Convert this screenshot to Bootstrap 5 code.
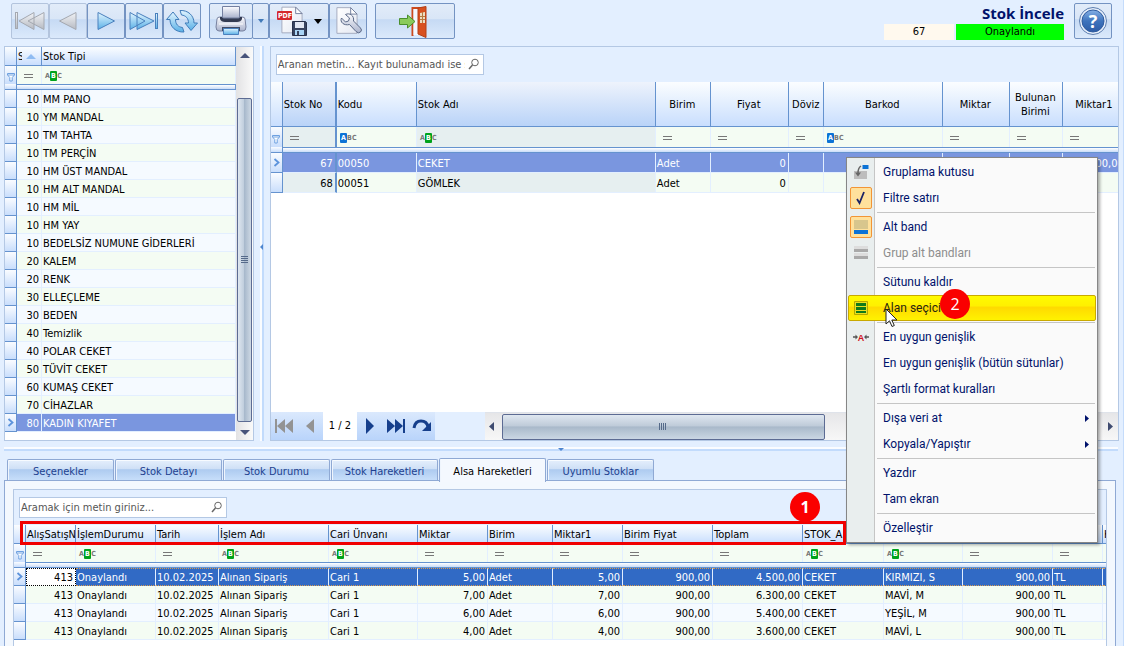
<!DOCTYPE html>
<html lang="tr">
<head>
<meta charset="utf-8">
<meta name="viewport" content="width=device-width, initial-scale=1">
<title>Stok İncele</title>
<link href="https://cdn.jsdelivr.net/npm/bootstrap@5.3.0/dist/css/bootstrap.min.css" rel="stylesheet">
<style>
:root{--line:#6593cf;--frame:#b4c8e4;--soft:#e3efff;--even:#f4fcf3;--odd:#f5faff;--navy:#00126b}
body{font:11px/14px "DejaVu Sans Condensed","DejaVu Sans",sans-serif;background:var(--soft);color:#000;height:100vh;overflow:hidden}
.app{height:100vh;border-right:1px solid #c5dcfb}
.topbar{padding:3px 11px 6px}
.tool{width:38px;height:36px;padding:0;border:1px solid #7493c2;border-radius:2px;background:linear-gradient(#e2ecf9 0,#d9e6f7 44%,#c6daf4 46%,#dbe9fb 100%);display:flex;align-items:center;justify-content:center}
.tool:disabled{border-color:#b3c4dd;opacity:1}
.tool-print{width:44px}
.tool-split{width:17px;margin-left:-1px}
.tool-pdf{width:60px;gap:6px}
.tool-exit{width:80px}
.caption{font:bold 15px/20px "Open Sans",sans-serif;color:var(--navy)}
.stat{height:16px;line-height:16px;font-size:11px;text-align:center;padding:0;border:0}
.stat-no{width:70px;background:#fff9ee}
.stat-state{width:108px;background:#0f0}
.frame{border:1px solid var(--frame)}
.side{width:250px;min-height:395px;background:#fff}
.vsplit{width:16px;position:relative}
.vsplit::before{content:"";position:absolute;left:6px;top:0;bottom:0;width:4px;background:linear-gradient(90deg,#fafcff 50%,#c2dbfc 50%)}
.hsplit{height:16px;position:relative}
.hsplit::before{content:"";position:absolute;left:4px;right:5px;top:6px;height:4px;background:linear-gradient(#fafcff 50%,#c2dbfc 50%)}
.vsplit svg{position:absolute;left:6px;top:50%}
.hsplit svg{position:absolute;left:calc(50% - 4px);top:7px}
.finder{width:208px;height:21px;margin:7px 5px;position:relative}
.finder input{width:100%;height:21px;padding:0 18px 0 1px;border:1px solid var(--frame);border-radius:0;font-size:11px;line-height:14px;background:#fff}
.finder input::placeholder{color:#555;opacity:1}
.finder svg{position:absolute;right:4px;top:4px}
.gridbox{background:#fff;overflow:hidden}
.dx{table-layout:fixed;border-collapse:separate;border-spacing:0;width:0}
.dx th,.dx td{padding:2px 2px 0 1px;height:18px;overflow:hidden;white-space:nowrap;border-right:1px solid var(--soft);border-bottom:1px solid var(--soft);vertical-align:middle}
.dx th{font-weight:400;background:linear-gradient(#fbfdff,#e2eefe 50%,#c9defe);border-color:var(--line);height:19px;padding-top:1px}
.dx td:first-child,.dx th:first-child{border-right-color:var(--line);border-bottom-color:var(--line);padding:0;text-align:center}
.dx td:first-child svg{display:block;margin:0 auto}
.dx .filt td{background:var(--even);border-bottom:0;height:18px;padding:1px 0 0 7px}
.dx .filt td:first-child{padding:4px 0 0}
.dx .filt td.txt{padding-left:3px}
.dx .band td:nth-child(2){height:6px;padding:0;border:1px solid var(--line);border-left:0;background:linear-gradient(#fff,#c9dcf8)}
.dx .band td:first-child{height:6px;border-bottom-color:var(--line)}
.dx tbody tr td{background:var(--even)}
.dx tbody tr.alt td{background:var(--odd)}
.dx .r{text-align:right}
.dx tr.sel td{background:#7a96df;color:#fff}
.dx tbody tr td:first-child,.dx tbody tr.sel td:first-child{background:linear-gradient(#fafcff,#c9defc)}
.eq{display:inline-block;width:9px;height:4px;border:solid #777;border-width:1px 0;vertical-align:middle}
.abc{font:bold 7px/10px "DejaVu Sans Condensed",sans-serif;color:#777;display:inline-flex;vertical-align:middle}
.abc>span{height:10px;width:5px;text-align:center}
.abc .g,.abc .b{background:#00a31c;color:#fff;border-radius:1px;width:7px}
.abc .b{background:#0c73d6}
.dx-main th{height:45px;text-align:center;white-space:normal}
.dx-main th.l{text-align:left}
.dx-main .filt td{height:20px}
.dx-main .row-l td{height:20px}
.dx-main .thick{border-right:2px solid var(--line)}
.dx-main tbody tr:not(.sel) td.lock{background:#e6eff0}
.dx-main th.lock{background:linear-gradient(#eef3fc,#b9d3f8)}
.dx-low tr.focus td{background:#316ac5;color:#fff;padding-top:1px;border-top:1px dotted #d79b52;border-bottom:1px dotted #d79b52}
.dx-low tr.focus td.cur{background:#fff;color:#000;border:1px dotted #000}
.dx-low tr.focus td:first-child{border-top:0;padding-top:0;border-bottom:1px solid var(--line)}
.vbar{width:17px;background:linear-gradient(90deg,#e2e2e4,#fafafa)}
.vbar .grow-thumb{flex:1;width:15px;border:1px solid #5c6b93;border-radius:2px;background:linear-gradient(90deg,#dfe7f0,#c0cedd 45%,#a8b9cc 50%,#cdd8e4);margin:40px 0 4px}
.pager{height:28px;background:var(--soft)}
.pager-set{background:linear-gradient(#dbe9fd,#b9d4fb)}
.pager-btn{border:0;padding:0;background:none;height:28px;width:26px;display:flex;align-items:center;justify-content:center}
.pager-pos{width:34px;line-height:28px}
.hbar{margin-left:50px;background:linear-gradient(#e6e6e8,#f7f7f7);border-top:1px solid #dfe3ea}
.hthumb{width:51%;margin-left:8px;height:26px;border:1px solid #5c6b93;border-radius:2px;background:linear-gradient(#dfe7f0,#bfcbd9 45%,#a9b9ca 50%,#cad6e3)}
.tabs{padding-left:7px;height:24px}
.tabs .tabbtn{width:107px;height:22px;margin-right:1px;border:1px solid #8fa9d4;border-bottom:0;border-radius:2px 2px 0 0;background:linear-gradient(#e5effc,#cfe0f6 42%,#aecbf0 46%,#c9e0fb);color:#1d3f8f;padding:2px 0 0;box-shadow:inset 0 1px #f7fbff,inset 1px 0 #eff5fd}
.tabs .tabbtn.active{height:24px;background:#f4f8fe;color:#000;position:relative;z-index:1;margin-bottom:-1px}
.pane{border:1px solid #8fa9d4;border-bottom:0;background:#f3f8fe;margin:-1px 7px 0 4px;padding:8px 8px 0;min-height:0}
.inner{border:1px solid var(--frame);border-bottom:0;background:var(--soft);position:relative;min-height:0}
.mark-box{position:absolute;left:6px;top:31px;width:826px;height:24px;border:3px solid #f00000}
.mark-no{position:absolute;width:30px;height:30px;border-radius:50%;background:#fa0000;color:#fff;font:16px/30px "Open Sans",sans-serif;text-align:center}
.mark-one{left:776px;top:2px;font-weight:bold}
.mark-two{left:93px;top:131px}
.ctx{position:absolute;right:25px;top:157px;width:252px;padding:1px;border:1px solid #868686;background:linear-gradient(90deg,#e9eeee 27px,#c5c5c5 27px,#c5c5c5 28px,#fafafa 28px);box-shadow:2px 2px 3px #0005;z-index:5;font:12px/16px Roboto,sans-serif}
.ctx button{display:flex;align-items:center;width:100%;height:26px;padding:0 0 0 2px;border:0;background:none;color:var(--navy);text-align:left}
.ctx button:disabled{color:#8d8d8d}
.ctx .ic{width:22px;height:22px;margin-right:11px;display:flex;align-items:center;justify-content:center;flex:none}
.ctx .on{background:#ffe19c;border:1px solid #f29536;border-radius:2px}
.ctx hr{margin:1px 1px 1px 29px;border:0;border-top:1px solid #c5c5c5;opacity:1;height:0}
.ctx .hot{border:1px solid #c9a900;border-radius:2px;background:linear-gradient(#fffb00,#fff000 42%,#ffd900 46%,#fff200);padding-left:1px;color:#26260f}
.ctx .tri{margin-left:auto;margin-right:7px}
.pointer{position:absolute;left:38px;top:150px}
</style>
</head>
<body>
<svg width="0" height="0" class="position-absolute">
<defs>
<linearGradient id="gg" x2="0" y2="1"><stop stop-color="#f1f3f6"/><stop offset="1" stop-color="#b6bac2"/></linearGradient>
<linearGradient id="gb" x2="0" y2="1"><stop stop-color="#e2f5ff"/><stop offset="1" stop-color="#5ab0e6"/></linearGradient>
<linearGradient id="gp" x2="0" y2="1"><stop stop-color="#fdfdff"/><stop offset="1" stop-color="#a9b2cc"/></linearGradient>
<linearGradient id="gh" x2="0" y2="1"><stop stop-color="#86b0e6"/><stop offset=".5" stop-color="#3e74bd"/><stop offset="1" stop-color="#2d5ca6"/></linearGradient>
<linearGradient id="gp2" x2="1" y2="1"><stop stop-color="#fff"/><stop offset="1" stop-color="#e4e8f2"/></linearGradient>
<symbol id="lens" viewBox="0 0 12 12"><circle cx="7" cy="4.500" r="3.300" fill="none" stroke="#666"/><path d="M4.500 7 1 11" stroke="#666" stroke-width="1.500"/></symbol>
<symbol id="funnel" viewBox="0 0 8 10"><path d="M.5 1.500h7v1.500l-2.300 2.500v3.500h-2.400v-3.500L.5 3z" fill="#fff" stroke="#6da0e0"/><path d="M1 3h6" stroke="#6da0e0"/></symbol>
<symbol id="chev" viewBox="0 0 7 9"><path d="M1.500 1l4 3.500-4 3.500" fill="none" stroke="#5c93dc" stroke-width="1.800"/></symbol>
<symbol id="page" viewBox="0 0 24 30"><path d="M1 1h15l7 7v21H1z" fill="url(#gp2)" stroke="#a1a7bb"/><path d="M16 1v7h7z" fill="#fff" stroke="#6f7b99"/></symbol>
</defs>
</svg>
<div class="app d-flex flex-column position-relative">

<header class="topbar d-flex align-items-start justify-content-between">
  <div class="d-flex" role="toolbar" aria-label="Araçlar">
    <button class="tool" disabled aria-label="İlk"><svg width="32" height="22"><g fill="url(#gg)" stroke="#a4a8b0"><rect x="1.500" y="2.500" width="2" height="16"/><path d="M20 2.500v17L5 11zM30 2.500v17L14 11z"/></g></svg></button>
    <button class="tool" disabled aria-label="Önceki"><svg width="22" height="22"><path d="M19 2.500v17L2.500 11z" fill="url(#gg)" stroke="#a4a8b0"/></svg></button>
    <button class="tool" aria-label="Sonraki"><svg width="22" height="22"><path d="M3 2.500v17L19.500 11z" fill="url(#gb)" stroke="#4a80bd"/></svg></button>
    <button class="tool" aria-label="Son"><svg width="32" height="22"><g fill="url(#gb)" stroke="#4a80bd"><path d="M2 2.500v17L17 11zM9 2.500v17L26 11z"/><rect x="27.500" y="3.500" width="2" height="15"/></g></svg></button>
    <button class="tool" aria-label="Yenile"><svg width="34" height="28"><g fill="url(#gb)" stroke="#3f7cba"><path d="M8 5l6 7.500h-3.500c0 4.500 2.500 7.500 7 8l1.500 4.500C11 25.500 5 20 5 12.500H1.500z"/><path d="M26 23.500L20 16h3.500c0-4.500-2.500-7.500-7-8L15 3.500C23 3 29 8.500 29 16h3.500z"/></g></svg></button>
    <button class="tool tool-print ms-2" aria-label="Yazdır"><svg width="32" height="32"><path d="M2 14q0-2 3-2h22q3 0 3 2l1 8q0 4-3 4H4q-3 0-3-4z" fill="url(#gp)" stroke="#77819f"/><path d="M5 12h22v2q-1 3-5 3H10q-4 0-5-3z" fill="#333b52"/><path d="M7.500 1.500h17V12q0 1-1 1h-15q-1 0-1-1z" fill="url(#gp)" stroke="#7480a0"/><path d="M7 22h18v4H7z" fill="#414a63"/><path d="M8.500 23.500h15v6h-15z" fill="url(#gb)" stroke="#4a80bd"/><path d="M4 19h24" stroke="#fff"/></svg></button>
    <button class="tool tool-split" aria-label="Yazdırma seçenekleri"><svg width="6" height="4"><path d="M0 0h6L3 4z" fill="#4179b8"/></svg></button>
    <button class="tool tool-pdf" aria-label="PDF kaydet"><svg width="32" height="32"><use href="#page" x="5" y="1" width="22" height="28"/><rect x="1" y="6" width="15" height="9" rx="1" fill="#d4282c"/><text x="2" y="13" font-size="7" font-weight="bold" fill="#fff" font-family="DejaVu Sans Condensed">PDF</text><path d="M16.500 16.500h13l1 1v13h-14z" fill="#38435e" stroke="#28314a"/><path d="M19 17h9v6h-9z" fill="#e2e7f2"/><path d="M19 25h9v5h-9z" fill="#a9d4f5"/><path d="M21 26h2v4h-2z" fill="#38435e"/></svg><svg width="8" height="5"><path d="M0 0h8L4 5z" fill="#000"/></svg></button>
    <button class="tool" aria-label="Ayarlar"><svg width="30" height="32"><use href="#page" x="3" y="1" width="22" height="29"/><path d="M8.500 13l4 4 3-1 1-3-4-3.500c4-2 9 1 8 6.500l7 7q2 2 0 4t-4.500-.5l-6.500-7C11 21 6.500 17 8.500 13z" fill="url(#gp)" stroke="#5c6a88"/></svg></button>
    <button class="tool tool-exit ms-2" aria-label="Çıkış"><svg width="34" height="34"><path d="M14.500 32V4H26" fill="none" stroke="#cc4a1e" stroke-width="2"/><path d="M15.500 5h6v26h-6z" fill="#f4f8ff"/><path d="M20 4l8-1.500v31L20 30z" fill="#d8501f" stroke="#b33f16"/><path d="M22 9l5-1v11h-5z" fill="#ecdcc0"/><path d="M24.500 8v11M22 12.500h5M22 15.500h5" stroke="#b8793f"/><path d="M1.500 14.500h8V11l7.500 6.500-7.500 6.500v-3.500h-8z" fill="#8acb5c" stroke="#4a8f2c"/></svg></button>
  </div>
  <div class="d-flex" style="gap:10px">
    <div class="text-end">
      <h1 class="caption m-0">Stok İncele</h1>
      <div class="d-flex" style="margin-top:1px;gap:2px"><output class="stat stat-no">67</output><output class="stat stat-state">Onaylandı</output></div>
    </div>
    <button class="tool" aria-label="Yardım"><svg width="30" height="30"><circle cx="15" cy="15" r="13.500" fill="#e6eefa" stroke="#5c7eb0"/><circle cx="15" cy="15" r="11" fill="url(#gh)" stroke="#2f5c9f"/><text x="15" y="21.500" text-anchor="middle" font-family="Open Sans" font-weight="bold" font-size="18" fill="#fff">?</text></svg></button>
  </div>
</header>

<section class="d-flex px-1">
  <aside class="side frame d-flex">
    <table class="dx align-self-start">
      <colgroup><col style="width:12px"><col style="width:25px"><col style="width:194px"></colgroup>
      <thead><tr><th></th><th><div class="d-flex align-items-center"><span style="width:4px" class="overflow-hidden">S</span><svg width="10" height="5" style="margin-left:4px"><path d="M0 5h10L5 0z" fill="#8fbcf2"/></svg></div></th><th>Stok Tipi</th></tr></thead>
      <tbody>
      <tr class="filt"><td><svg width="8" height="10"><use href="#funnel"/></svg></td><td><i class="eq"></i></td><td class="txt"><span class="abc"><span>A</span><span class="g">B</span><span>C</span></span></td></tr>
      <tr class="band"><td></td><td colspan="2"></td></tr>
      <tr class="alt"><td></td><td class="r">10</td><td>MM PANO</td></tr>
      <tr><td></td><td class="r">10</td><td>YM MANDAL</td></tr>
      <tr class="alt"><td></td><td class="r">10</td><td>TM TAHTA</td></tr>
      <tr><td></td><td class="r">10</td><td>TM PERÇİN</td></tr>
      <tr class="alt"><td></td><td class="r">10</td><td>HM ÜST MANDAL</td></tr>
      <tr><td></td><td class="r">10</td><td>HM ALT MANDAL</td></tr>
      <tr class="alt"><td></td><td class="r">10</td><td>HM MİL</td></tr>
      <tr><td></td><td class="r">10</td><td>HM YAY</td></tr>
      <tr class="alt"><td></td><td class="r">10</td><td>BEDELSİZ NUMUNE GİDERLERİ</td></tr>
      <tr><td></td><td class="r">20</td><td>KALEM</td></tr>
      <tr class="alt"><td></td><td class="r">20</td><td>RENK</td></tr>
      <tr><td></td><td class="r">30</td><td>ELLEÇLEME</td></tr>
      <tr class="alt"><td></td><td class="r">30</td><td>BEDEN</td></tr>
      <tr><td></td><td class="r">40</td><td>Temizlik</td></tr>
      <tr class="alt"><td></td><td class="r">40</td><td>POLAR CEKET</td></tr>
      <tr><td></td><td class="r">50</td><td>TÜVİT CEKET</td></tr>
      <tr class="alt"><td></td><td class="r">60</td><td>KUMAŞ CEKET</td></tr>
      <tr><td></td><td class="r">70</td><td>CİHAZLAR</td></tr>
      <tr class="sel"><td><svg width="7" height="9"><use href="#chev"/></svg></td><td class="r">80</td><td>KADIN KIYAFET</td></tr>
      </tbody>
    </table>
    <div class="vbar d-flex flex-column align-items-center">
      <svg width="10" height="5" style="margin-top:6px"><path d="M0 5h10L5 0z" fill="#47537a"/></svg>
      <div class="grow-thumb d-flex align-items-center justify-content-center"><svg width="7" height="8"><path d="M0 .5h7M0 2.500h7M0 4.500h7M0 6.500h7" stroke="#556a8a"/></svg></div>
      <svg width="10" height="5" style="margin:4px 0 5px"><path d="M0 0h10L5 5z" fill="#47537a"/></svg>
    </div>
  </aside>
  <div class="vsplit"><svg width="3" height="6"><path d="M3 0v6L0 3z" fill="#4f86cf"/></svg></div>
  <main class="frame flex-grow-1 d-flex flex-column overflow-hidden">
    <div class="finder"><input type="text" class="form-control shadow-none" aria-label="Stok ara" placeholder="Aranan metin... Kayıt bulunamadı ise sa"><svg width="12" height="12"><use href="#lens"/></svg></div>
    <div class="gridbox flex-grow-1">
      <table class="dx dx-main">
        <colgroup><col style="width:12px"><col style="width:54px"><col style="width:80px"><col style="width:239px"><col style="width:55px"><col style="width:78px"><col style="width:35px"><col style="width:119px"><col style="width:67px"><col style="width:53px"><col style="width:64px"></colgroup>
        <thead><tr><th></th><th class="l thick lock">Stok No</th><th class="l">Kodu</th><th class="l lock">Stok Adı</th><th>Birim</th><th>Fiyat</th><th class="px-0">Döviz</th><th>Barkod</th><th>Miktar</th><th>Bulunan Birimi</th><th>Miktar1</th></tr></thead>
        <tbody>
        <tr class="filt"><td><svg width="8" height="10"><use href="#funnel"/></svg></td><td class="thick lock"><i class="eq"></i></td><td class="txt"><span class="abc"><span class="b">A</span><span>B</span><span>C</span></span></td><td class="lock txt"><span class="abc"><span>A</span><span class="g">B</span><span>C</span></span></td><td><i class="eq"></i></td><td><i class="eq"></i></td><td><i class="eq"></i></td><td class="txt"><span class="abc"><span class="b">A</span><span>B</span><span>C</span></span></td><td><i class="eq"></i></td><td><i class="eq"></i></td><td><i class="eq"></i></td></tr>
        <tr class="band"><td></td><td colspan="10"></td></tr>
        <tr class="row-l sel"><td><svg width="7" height="9"><use href="#chev"/></svg></td><td class="r thick">67</td><td>00050</td><td>CEKET</td><td>Adet</td><td class="r">0</td><td></td><td></td><td></td><td></td><td class="r">900,00</td></tr>
        <tr class="row-l"><td></td><td class="r thick lock">68</td><td>00051</td><td class="lock">GÖMLEK</td><td>Adet</td><td class="r">0</td><td></td><td></td><td></td><td></td><td></td></tr>
        </tbody>
      </table>
    </div>
    <div class="pager d-flex">
      <div class="pager-set d-flex">
        <button class="pager-btn" disabled aria-label="İlk kayıt"><svg width="20" height="16"><path d="M1 1h2v14H1zM11 1v14L3 8zM19 1v14L11 8z" fill="#939393"/></svg></button>
        <button class="pager-btn" disabled aria-label="Önceki kayıt"><svg width="10" height="14"><path d="M9 0v14L1 7z" fill="#939393"/></svg></button>
        <div class="pager-pos bg-white text-center">1 / 2</div>
        <button class="pager-btn" aria-label="Sonraki kayıt"><svg width="10" height="16"><path d="M1 0v16L9 8z" fill="#163f8c"/></svg></button>
        <button class="pager-btn" aria-label="Son kayıt"><svg width="20" height="16"><path d="M1 1v14L9 8zM9 1v14L17 8zM17 1h2v14h-2z" fill="#163f8c"/></svg></button>
        <button class="pager-btn" aria-label="Tazele"><svg width="20" height="16"><path d="M2 10q1-7 7-7t7 6" fill="none" stroke="#163f8c" stroke-width="3"/><path d="M19 4v9h-9z" fill="#163f8c"/></svg></button>
      </div>
      <div class="hbar flex-grow-1 d-flex align-items-center">
        <svg width="5" height="9" style="margin-left:4px"><path d="M5 0v9L0 4.500z" fill="#3f4b70"/></svg>
        <div class="hthumb d-flex align-items-center justify-content-center"><svg width="8" height="7"><path d="M.5 0v7M2.500 0v7M4.500 0v7M6.500 0v7" stroke="#556a8a"/></svg></div>
        <svg width="5" height="9" class="ms-auto" style="margin-right:5px"><path d="M0 0v9l5-4.500z" fill="#3f4b70"/></svg>
      </div>
    </div>
  </main>
</section>

<div class="hsplit"><svg width="6" height="3"><path d="M0 0h6L3 3z" fill="#4f86cf"/></svg></div>

<div class="tabs d-flex align-items-end" role="tablist">
  <button class="tabbtn" role="tab">Seçenekler</button>
  <button class="tabbtn" role="tab">Stok Detayı</button>
  <button class="tabbtn" role="tab">Stok Durumu</button>
  <button class="tabbtn" role="tab">Stok Hareketleri</button>
  <button class="tabbtn active" role="tab" aria-selected="true">Alsa Hareketleri</button>
  <button class="tabbtn" role="tab">Uyumlu Stoklar</button>
</div>
<section class="pane flex-grow-1 d-flex flex-column">
  <div class="inner flex-grow-1 d-flex flex-column">
    <div class="finder"><input type="text" class="form-control shadow-none" aria-label="Hareket ara" placeholder="Aramak için metin giriniz..."><svg width="12" height="12"><use href="#lens"/></svg></div>
    <div class="gridbox flex-grow-1">
      <table class="dx dx-low">
        <colgroup><col style="width:12px"><col style="width:50px"><col style="width:80px"><col style="width:63px"><col style="width:110px"><col style="width:89px"><col style="width:70px"><col style="width:65px"><col style="width:70px"><col style="width:90px"><col style="width:90px"><col style="width:81px"><col style="width:79px"><col style="width:90px"><col style="width:50px"><col style="width:60px"></colgroup>
        <thead><tr><th></th><th style="padding-right:0">AlışSatışN</th><th>İşlemDurumu</th><th>Tarih</th><th>İşlem Adı</th><th>Cari Ünvanı</th><th>Miktar</th><th>Birim</th><th>Miktar1</th><th>Birim Fiyat</th><th>Toplam</th><th>STOK_A</th><th></th><th></th><th></th><th>K</th></tr></thead>
        <tbody>
        <tr class="filt"><td><svg width="8" height="10"><use href="#funnel"/></svg></td><td><i class="eq"></i></td><td class="txt"><span class="abc"><span>A</span><span class="g">B</span><span>C</span></span></td><td><i class="eq"></i></td><td class="txt"><span class="abc"><span>A</span><span class="g">B</span><span>C</span></span></td><td class="txt"><span class="abc"><span>A</span><span class="g">B</span><span>C</span></span></td><td><i class="eq"></i></td><td><i class="eq"></i></td><td><i class="eq"></i></td><td><i class="eq"></i></td><td><i class="eq"></i></td><td class="txt"><span class="abc"><span>A</span><span class="g">B</span><span>C</span></span></td><td class="txt"><span class="abc"><span>A</span><span class="g">B</span><span>C</span></span></td><td><i class="eq"></i></td><td><i class="eq"></i></td><td></td></tr>
        <tr class="band"><td></td><td colspan="15"></td></tr>
        <tr class="focus"><td><svg width="7" height="9"><use href="#chev"/></svg></td><td class="r cur">413</td><td>Onaylandı</td><td>10.02.2025</td><td>Alınan Sipariş</td><td>Cari 1</td><td class="r">5,00</td><td>Adet</td><td class="r">5,00</td><td class="r">900,00</td><td class="r">4.500,00</td><td>CEKET</td><td>KIRMIZI, S</td><td class="r">900,00</td><td>TL</td><td></td></tr>
        <tr><td></td><td class="r">413</td><td>Onaylandı</td><td>10.02.2025</td><td>Alınan Sipariş</td><td>Cari 1</td><td class="r">7,00</td><td>Adet</td><td class="r">7,00</td><td class="r">900,00</td><td class="r">6.300,00</td><td>CEKET</td><td>MAVİ, M</td><td class="r">900,00</td><td>TL</td><td></td></tr>
        <tr class="alt"><td></td><td class="r">413</td><td>Onaylandı</td><td>10.02.2025</td><td>Alınan Sipariş</td><td>Cari 1</td><td class="r">6,00</td><td>Adet</td><td class="r">6,00</td><td class="r">900,00</td><td class="r">5.400,00</td><td>CEKET</td><td>YEŞİL, M</td><td class="r">900,00</td><td>TL</td><td></td></tr>
        <tr><td></td><td class="r">413</td><td>Onaylandı</td><td>10.02.2025</td><td>Alınan Sipariş</td><td>Cari 1</td><td class="r">4,00</td><td>Adet</td><td class="r">4,00</td><td class="r">900,00</td><td class="r">3.600,00</td><td>CEKET</td><td>MAVİ, L</td><td class="r">900,00</td><td>TL</td><td></td></tr>
        </tbody>
      </table>
    </div>
    <div class="mark-box"></div>
    <div class="mark-no mark-one">1</div>
  </div>
</section>

<div class="ctx" role="menu">
  <button role="menuitem"><span class="ic"><svg width="16" height="16"><path d="M1 7h13v8H1z" fill="#bdbdbd"/><path d="M9.500 1h6v4h-6z" fill="#0c73d6"/><path d="M8 2Q5 4 5 9" fill="none" stroke="#666" stroke-width="1.500"/><path d="M2 8.500h6L5 12.500z" fill="#666"/></svg></span>Gruplama kutusu</button>
  <button role="menuitem"><span class="ic on"><svg width="12" height="14"><path d="M2 8l2.500 4L9 1" fill="none" stroke="#1c2366" stroke-width="1.800"/></svg></span>Filtre satırı</button>
  <hr>
  <button role="menuitem"><span class="ic on"><svg width="14" height="14"><path d="M0 0h14v9H0z" fill="#d8c68d"/><path d="M0 10h14v4H0z" fill="#0c73d6"/></svg></span>Alt band</button>
  <button role="menuitem" disabled><span class="ic"><svg width="14" height="14"><path d="M0 0h14v3H0zM0 7h14v3H0z" fill="#ddd"/><path d="M0 3h14v3H0zM0 10h14v3H0z" fill="#a9a9a9"/></svg></span>Grup alt bandları</button>
  <hr>
  <button role="menuitem"><span class="ic"></span>Sütunu kaldır</button>
  <button role="menuitem" class="hot"><span class="ic"><svg width="14" height="14"><path d="M.5.5h13v13H.5z" fill="#e8df20" stroke="#b5a900"/><path d="M2 2h10v3H2zM2 6h10v3H2zM2 10h10v2H2z" fill="#0f7a1a"/></svg></span>Alan seçici</button>
  <hr>
  <button role="menuitem"><span class="ic"><svg width="16" height="12"><path d="M0 6h4M16 6h-4" stroke="#555" stroke-width="1.500"/><path d="M2.500 3.500v5L5 6zM13.500 3.500v5L11 6z" fill="#555"/><text x="8" y="9.500" text-anchor="middle" font-family="Liberation Sans" font-weight="bold" font-size="9" fill="#d0121b">A</text></svg></span>En uygun genişlik</button>
  <button role="menuitem"><span class="ic"></span>En uygun genişlik (bütün sütunlar)</button>
  <button role="menuitem"><span class="ic"></span>Şartlı format kuralları</button>
  <hr>
  <button role="menuitem"><span class="ic"></span>Dışa veri at<svg class="tri" width="4" height="7"><path d="M0 0v7l4-3.500z" fill="#00126b"/></svg></button>
  <button role="menuitem"><span class="ic"></span>Kopyala/Yapıştır<svg class="tri" width="4" height="7"><path d="M0 0v7l4-3.500z" fill="#00126b"/></svg></button>
  <hr>
  <button role="menuitem"><span class="ic"></span>Yazdır</button>
  <button role="menuitem"><span class="ic"></span>Tam ekran</button>
  <hr>
  <button role="menuitem"><span class="ic"></span>Özelleştir</button>
  <div class="mark-no mark-two">2</div>
  <svg class="pointer" width="13" height="20"><path d="M1 1v15l3.500-3.200 2.500 5.700 2.300-1-2.500-5.500H12z" fill="#fff" stroke="#222"/></svg>
</div>
</div>
<script src="https://cdn.jsdelivr.net/npm/bootstrap@5.3.0/dist/js/bootstrap.bundle.min.js"></script>
</body>
</html>
